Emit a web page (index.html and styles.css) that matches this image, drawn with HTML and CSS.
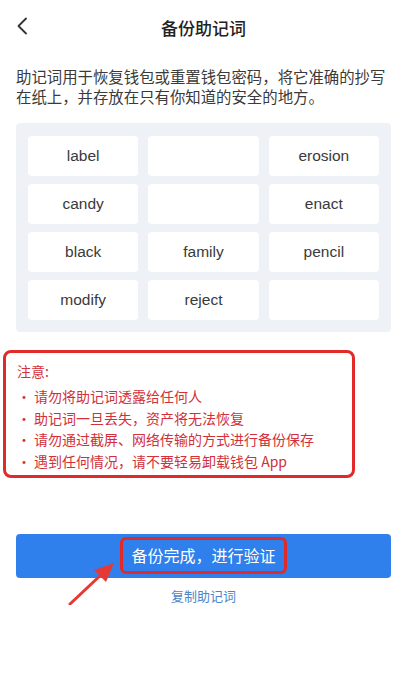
FILE: index.html
```html
<!DOCTYPE html>
<html lang="zh-CN">
<head>
  <meta charset="UTF-8" />
  <title>备份助记词</title>
  <link rel="stylesheet" href="styles.css">
</head>
<body>
  <div class="page">
    <!-- 顶部导航 -->
    <div class="header">
      <svg class="back" width="12" height="18" viewBox="0 0 12 18">
        <path d="M10 1.5 L2.5 9 L10 16.5" fill="none" stroke="#333" stroke-width="1.8" stroke-linecap="round" stroke-linejoin="round"/>
      </svg>
      <div class="title">备份助记词</div>
    </div>

    <p class="desc">助记词用于恢复钱包或重置钱包密码，将它准确的抄写在纸上，并存放在只有你知道的安全的地方。</p>

    <div class="words">
      <div class="word">label</div>
      <div class="word"></div>
      <div class="word">erosion</div>
      <div class="word">candy</div>
      <div class="word"></div>
      <div class="word">enact</div>
      <div class="word">black</div>
      <div class="word">family</div>
      <div class="word">pencil</div>
      <div class="word">modify</div>
      <div class="word">reject</div>
      <div class="word"></div>
    </div>

    <div class="notice">
      <div class="notice-title">注意:</div>
      <ul>
        <li>请勿将助记词透露给任何人</li>
        <li>助记词一旦丢失，资产将无法恢复</li>
        <li>请勿通过截屏、网络传输的方式进行备份保存</li>
        <li>遇到任何情况，请不要轻易卸载钱包 App</li>
      </ul>
    </div>

    <div class="actions">
      <button class="btn-main"><span class="mark">备份完成，进行验证</span></button>
      <svg class="arrow" width="60" height="50" viewBox="0 0 60 50">
        <path d="M6 46 L40 14" stroke="#e53935" stroke-width="3" stroke-linecap="round"/>
        <path d="M50 5 L30 12 L42 24 Z" fill="#e53935"/>
      </svg>
      <div class="copy">复制助记词</div>
    </div>
  </div>
</body>
</html>
```

FILE: styles.css
```css
body {
  margin: 0;
  background: #fff;
  font-family: "Noto Sans CJK SC", "Noto Sans", sans-serif;
  color: #333;
}
.page { padding: 0 9px 0 16px; }

.header {
  height: 54px;
  display: flex;
  align-items: center;
  justify-content: center;
  position: relative;
}
.header .back { position: absolute; left: 0; top: 17px; }
.title { font-size: 17px; font-weight: 500; color: #222; }

.desc {
  margin: 12px 0 0;
  font-size: 15.4px;
  line-height: 20px;
  color: #3a3a3a;
}

.words {
  margin-top: 17px;
  background: #eef2f7;
  border-radius: 4px;
  padding: 13px 12px 12px;
  display: grid;
  grid-template-columns: repeat(3, 1fr);
  column-gap: 10px;
  row-gap: 8px;
}
.word {
  height: 40px;
  background: #fff;
  border-radius: 4px;
  display: flex;
  align-items: center;
  justify-content: center;
  font-family: "Liberation Sans", Arial, sans-serif;
  font-size: 15.5px;
  color: #3a3a3a;
}

.notice {
  margin: 18px 0 0 -13px;
  width: 335px;
  border: 3px solid #e12a2a;
  border-radius: 8px;
  padding: 7px 0 2px 11px;
  color: #d2303a;
  font-size: 14px;
}
.notice-title { line-height: 22px; margin-bottom: 4px; }
.notice ul { margin: 0; padding: 0; list-style: none; }
.notice li { line-height: 21.7px; }
.notice li::before { content: "·"; margin-right: 3px; }

.actions {
  margin-top: 56px;
  position: relative;
  text-align: center;
}
.btn-main {
  display: flex;
  align-items: center;
  justify-content: center;
  width: 100%;
  height: 44px;
  border: none;
  border-radius: 4px;
  background: #2f80ed;
  padding: 0;
  font-family: inherit;
}
.btn-main .mark {
  display: inline-block;
  border: 3px solid #e12a2a;
  border-radius: 6px;
  padding: 2px 8px;
  color: #fff;
  font-size: 16px;
  line-height: 27px;
}
.arrow { position: absolute; left: 48px; top: 24px; }
.copy {
  margin-top: 8px;
  font-size: 13px;
  color: #4a86c8;
}
```
